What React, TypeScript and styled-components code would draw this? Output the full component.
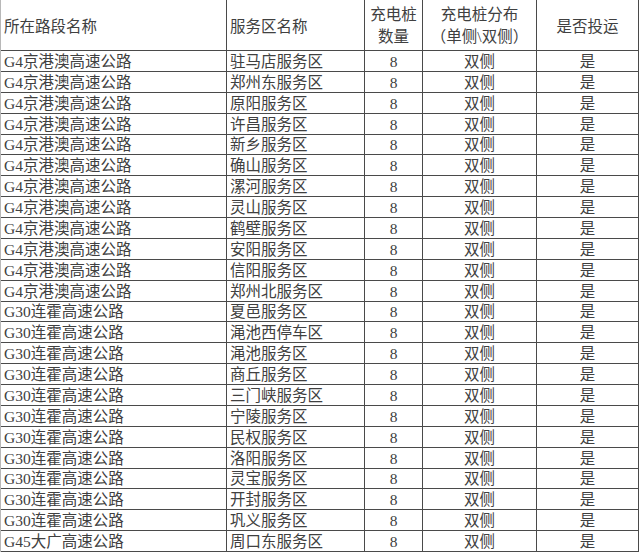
import React from 'react'
import styled, { createGlobalStyle } from 'styled-components'

interface RowData {
  road: string
  area: string
}

const G4 = 'G4京港澳高速公路'
const G30 = 'G30连霍高速公路'
const G45 = 'G45大广高速公路'

const rows: RowData[] = [
  ...[
    '驻马店服务区',
    '郑州东服务区',
    '原阳服务区',
    '许昌服务区',
    '新乡服务区',
    '确山服务区',
    '漯河服务区',
    '灵山服务区',
    '鹤壁服务区',
    '安阳服务区',
    '信阳服务区',
    '郑州北服务区',
  ].map((area) => ({ road: G4, area })),
  ...[
    '夏邑服务区',
    '渑池西停车区',
    '渑池服务区',
    '商丘服务区',
    '三门峡服务区',
    '宁陵服务区',
    '民权服务区',
    '洛阳服务区',
    '灵宝服务区',
    '开封服务区',
    '巩义服务区',
  ].map((area) => ({ road: G30, area })),
  { road: G45, area: '周口东服务区' },
]

const GlobalStyle = createGlobalStyle`
  html, body {
    margin: 0;
    padding: 0;
    background: #ffffff;
  }
`

export default function App() {
  return (
    <>
      <GlobalStyle />
      <Table>
        <HeaderCell $single>所在路段名称</HeaderCell>
        <HeaderCell $single>服务区名称</HeaderCell>
        <HeaderCell $align="center">
          充电桩
          <br />
          数量
        </HeaderCell>
        <HeaderCell $align="center">
          充电桩分布
          <br />
          （单侧\双侧）
        </HeaderCell>
        <HeaderCell $align="center" $single>
          是否投运
        </HeaderCell>
        {rows.map((row, i) => (
          <React.Fragment key={i}>
            <Cell>{row.road}</Cell>
            <Cell>{row.area}</Cell>
            <Cell $align="center">8</Cell>
            <Cell $align="center">双侧</Cell>
            <Cell $align="center">是</Cell>
          </React.Fragment>
        ))}
      </Table>
    </>
  )
}

const Table = styled.div`
  display: grid;
  grid-template-columns: 226px 138px 58px 114px 102px;
  grid-template-rows: 51px repeat(24, 20.875px);
  width: 639px;
  border-left: 1px solid #b8b8b8;
  font-family: 'Liberation Serif', 'Noto Sans CJK SC', serif;
  font-size: 15.5px;
  color: #404040;
`

const Cell = styled.div<{ $align?: 'left' | 'center' }>`
  display: flex;
  flex-direction: column;
  justify-content: center;
  align-items: ${({ $align }) => ($align === 'center' ? 'center' : 'flex-start')};
  text-align: ${({ $align }) => $align ?? 'left'};
  box-sizing: border-box;
  padding: 1px 0 0 ${({ $align }) => ($align === 'center' ? '0' : '3px')};
  line-height: 19px;
  white-space: nowrap;
  overflow: hidden;
  border-right: 1px solid #4a4a4a;
  border-bottom: 1px solid #4a4a4a;
`

const HeaderCell = styled(Cell)<{ $single?: boolean }>`
  && {
    justify-content: flex-start;
    padding-top: ${({ $single }) => ($single ? '16px' : '4px')};
    line-height: 22px;
  }
`
